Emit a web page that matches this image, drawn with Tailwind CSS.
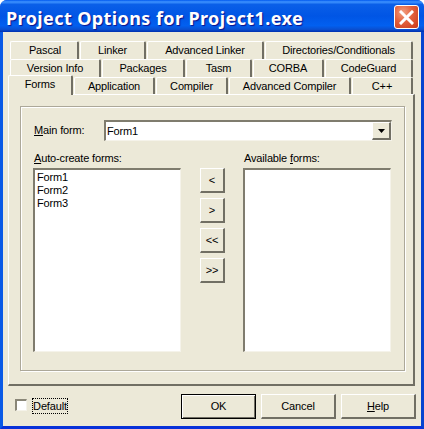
<!DOCTYPE html>
<html lang="en">
<head>
<meta charset="UTF-8" />
<title>Project Options for Project1.exe</title>
<script src="https://cdn.jsdelivr.net/npm/@tailwindcss/browser@4"></script>
</head>
<body class="bg-white">
<div class="w-[424px] h-[429px] flex flex-col overflow-hidden rounded-t-[7px] bg-[#0a50dc] text-[11px] leading-[13px] tracking-[-0.15px] text-black font-['Liberation_Sans',sans-serif]">

  <!-- title bar -->
  <div class="h-[32px] shrink-0 flex items-center justify-between pl-[6px] pr-[5px] bg-[linear-gradient(180deg,#0058ee_0%,#3f93ff_6%,#0a5fe8_14%,#0055e5_50%,#0260f0_80%,#0a4fd0_92%,#0030b0_100%)]">
    <span class="pt-[3px] font-['Noto_Sans',sans-serif] font-bold text-[18px] leading-[24px] tracking-[0.4px] text-white [text-shadow:1px_1px_1px_#0f1089]">Project Options for Project1.exe</span>
    <div class="w-[25px] h-[24px] mt-[2px] rounded-[3px] border border-white bg-[radial-gradient(circle_at_35%_30%,#f2a080_0%,#e2603c_45%,#c8391a_100%)] flex items-center justify-center">
      <svg width="15" height="15" viewBox="0 0 15 15"><path d="M2 2 L13 13 M13 2 L2 13" stroke="#fff" stroke-width="3" stroke-linecap="square" /></svg>
    </div>
  </div>

  <!-- dialog body -->
  <div class="flex-1 border-l-[3px] border-l-[#0a5ae6] border-r-[3px] border-r-[#0644d0] border-b-[3px] border-b-[#0831d9] bg-[#ece9d8] flex flex-col">
    <!-- tabs -->
    <div class="pt-[9px]">
      <div class="flex h-[18px] pl-[7px] gap-[1px]">
        <div class="w-[69px] flex items-center justify-center border-t border-l border-white border-r-2 border-r-[#716f64] rounded-t-[2px] pl-[2px]">Pascal</div>
        <div class="w-[66px] flex items-center justify-center border-t border-l border-white border-r-2 border-r-[#716f64] rounded-t-[2px]">Linker</div>
        <div class="w-[117px] flex items-center justify-center border-t border-l border-white border-r-2 border-r-[#716f64] rounded-t-[2px]">Advanced Linker</div>
        <div class="w-[148px] flex items-center justify-center border-t border-l border-white border-r-2 border-r-[#716f64] rounded-t-[2px]">Directories/Conditionals</div>
      </div>
      <div class="flex h-[18px] pl-[7px] gap-[1px]">
        <div class="w-[91px] flex items-center justify-center border-t border-l border-white border-r-2 border-r-[#716f64] rounded-t-[2px]">Version Info</div>
        <div class="w-[83px] flex items-center justify-center border-t border-l border-white border-r-2 border-r-[#716f64] rounded-t-[2px]">Packages</div>
        <div class="w-[66px] flex items-center justify-center border-t border-l border-white border-r-2 border-r-[#716f64] rounded-t-[2px]">Tasm</div>
        <div class="w-[71px] flex items-center justify-center border-t border-l border-white border-r-2 border-r-[#716f64] rounded-t-[2px]">CORBA</div>
        <div class="w-[88px] flex items-center justify-center border-t border-l border-white border-r-2 border-r-[#716f64] rounded-t-[2px]">CodeGuard</div>
      </div>
      <div class="flex h-[17px] pl-[5px] items-end">
        <div class="relative z-10 w-[65px] h-[20px] -mt-[3px] mb-[-1px] pb-[3px] flex items-center justify-center bg-[#ece9d8] border-t border-l border-white border-r-2 border-r-[#716f64] rounded-t-[2px]">Forms</div>
        <div class="flex h-[17px] gap-[1px] ml-[1px]">
          <div class="w-[81px] flex items-center justify-center border-t border-l border-white border-r-2 border-r-[#716f64] rounded-t-[2px]">Application</div>
          <div class="w-[72px] flex items-center justify-center border-t border-l border-white border-r-2 border-r-[#716f64] rounded-t-[2px]">Compiler</div>
          <div class="w-[122px] flex items-center justify-center border-t border-l border-white border-r-2 border-r-[#716f64] rounded-t-[2px]">Advanced Compiler</div>
          <div class="w-[61px] flex items-center justify-center border-t border-l border-white border-r-2 border-r-[#716f64] rounded-t-[2px]">C++</div>
        </div>
      </div>
    </div>

    <!-- page -->
    <div class="ml-[5px] w-[407px] h-[292px] border-t border-l border-white border-r-2 border-r-[#716f64] border-b-2 border-b-[#716f64] pt-[11px] pl-[11px]">
      <!-- group -->
      <div class="w-[385px] h-[265px] border border-[#aca899] shadow-[inset_1px_1px_0_#fff,1px_1px_0_#fff] pt-[13px] pl-[12px]">
        <div class="flex items-center h-[21px]">
          <span class="w-[71px] pl-[1px]"><u>M</u>ain form:</span>
          <div class="w-[288px] h-[21px] bg-white border-t-2 border-l-2 border-t-[#7f7c6e] border-l-[#7f7c6e] border-b border-r border-b-[#f5f3ea] border-r-[#f5f3ea] flex items-center justify-between pl-[1px]">
            <span>Form1</span>
            <div class="w-[19px] h-[18px] bg-[#ece9d8] border-t border-l border-white border-b-2 border-r-2 border-b-[#716f64] border-r-[#716f64] flex items-center justify-center">
              <svg width="7" height="4" viewBox="0 0 7 4"><path d="M0 0H7L3.5 4Z" fill="#000" /></svg>
            </div>
          </div>
        </div>
        <div class="flex mt-[11px]">
          <div class="w-[148px]">
            <div class="h-[16px] pl-[1px]"><u>A</u>uto-create forms:</div>
            <div class="h-[184px] bg-white border-t-2 border-l-2 border-t-[#7f7c6e] border-l-[#7f7c6e] border-b border-r border-b-[#f5f3ea] border-r-[#f5f3ea] pl-[2px] pt-[1px]">
              <div>Form1</div>
              <div>Form2</div>
              <div>Form3</div>
            </div>
          </div>
          <div class="w-[25px] ml-[19px] mt-[16px] flex flex-col gap-[5px]">
            <div class="h-[25px] bg-[#ece9d8] border-t border-l border-white border-b-2 border-r-2 border-b-[#716f64] border-r-[#716f64] flex items-center justify-center">&lt;</div>
            <div class="h-[25px] bg-[#ece9d8] border-t border-l border-white border-b-2 border-r-2 border-b-[#716f64] border-r-[#716f64] flex items-center justify-center">&gt;</div>
            <div class="h-[25px] bg-[#ece9d8] border-t border-l border-white border-b-2 border-r-2 border-b-[#716f64] border-r-[#716f64] flex items-center justify-center">&lt;&lt;</div>
            <div class="h-[25px] bg-[#ece9d8] border-t border-l border-white border-b-2 border-r-2 border-b-[#716f64] border-r-[#716f64] flex items-center justify-center">&gt;&gt;</div>
          </div>
          <div class="w-[148px] ml-[18px]">
            <div class="h-[16px] pl-[1px]">Available <u>f</u>orms:</div>
            <div class="h-[184px] bg-white border-t-2 border-l-2 border-t-[#7f7c6e] border-l-[#7f7c6e] border-b border-r border-b-[#f5f3ea] border-r-[#f5f3ea]"></div>
          </div>
        </div>
      </div>
    </div>

    <!-- footer -->
    <div class="flex items-start mt-[8px] pl-[12px]">
      <div class="w-[12px] h-[12px] mt-[5px] bg-white border-t-2 border-l-2 border-t-[#8a8778] border-l-[#8a8778] border-b border-r border-b-[#f5f3ea] border-r-[#f5f3ea]"></div>
      <div class="w-[36px] h-[16px] mt-[4px] ml-[5px] border border-dotted border-black flex items-center justify-center">Default</div>
      <div class="w-[75px] h-[25px] ml-[113px] bg-[#ece9d8] border border-black shadow-[inset_1px_1px_0_#fff,inset_-1px_-1px_0_#716f64] flex items-center justify-center">OK</div>
      <div class="w-[75px] h-[25px] ml-[5px] bg-[#ece9d8] border-t border-l border-white border-b-2 border-r-2 border-b-[#716f64] border-r-[#716f64] flex items-center justify-center">Cancel</div>
      <div class="w-[75px] h-[25px] ml-[5px] bg-[#ece9d8] border-t border-l border-white border-b-2 border-r-2 border-b-[#716f64] border-r-[#716f64] flex items-center justify-center"><span><u>H</u>elp</span></div>
    </div>
  </div>
</div>
</body>
</html>
